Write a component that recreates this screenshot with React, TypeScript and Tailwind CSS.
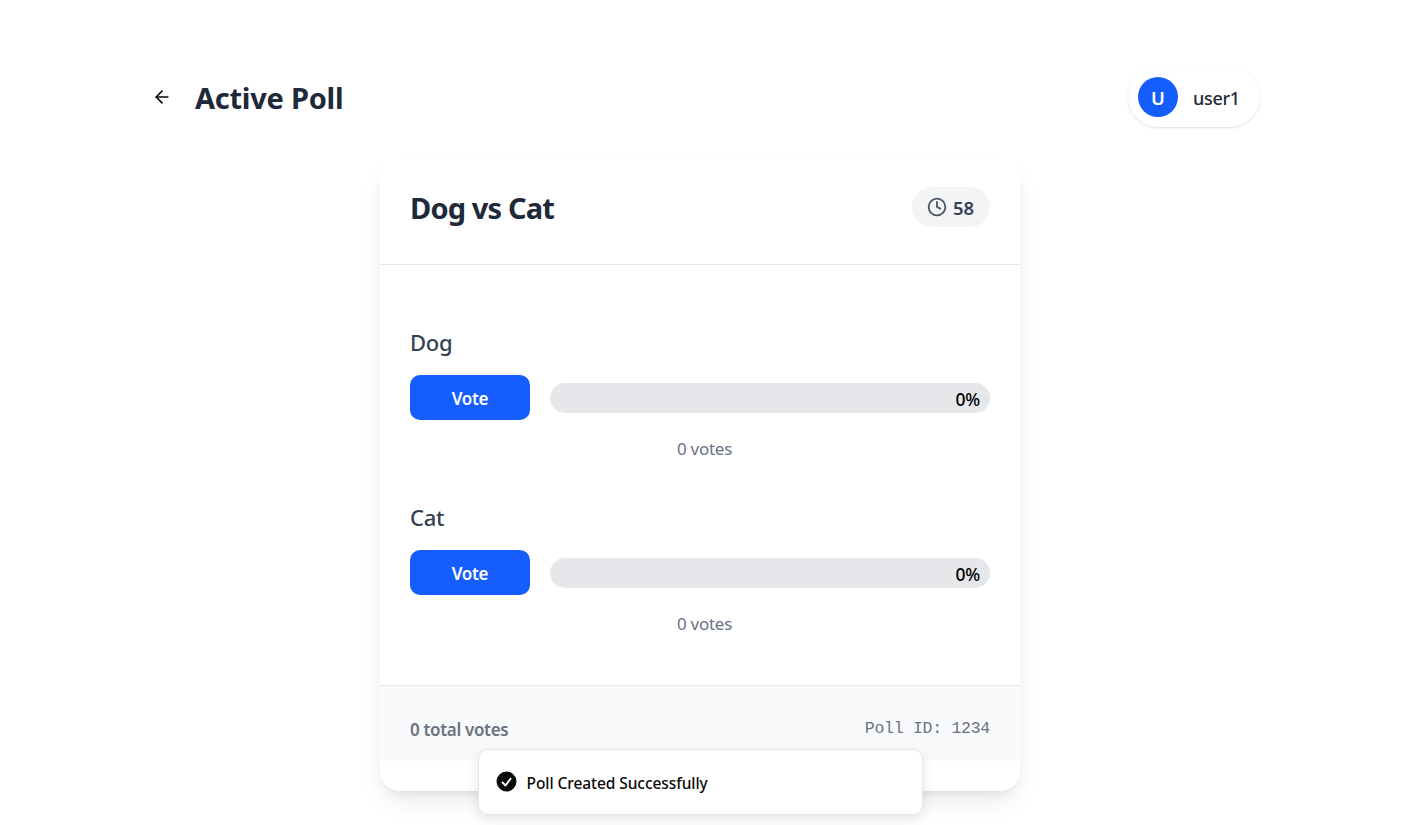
import { ArrowLeft, Clock } from "lucide-react";

const SANS = "font-['Noto_Sans','Open_Sans',sans-serif]";

type Option = { name: string; votes: number; percent: number };

const options: Option[] = [
  { name: "Dog", votes: 0, percent: 0 },
  { name: "Cat", votes: 0, percent: 0 },
];

function PollOption({ name, votes, percent }: Option) {
  return (
    <div className="h-[135px]">
      <h3 className="text-[22px] leading-[35px] font-medium tracking-[-0.3px] text-gray-700">{name}</h3>
      <div className="mt-[15px] flex items-center gap-5">
        <button className="h-[45px] w-[120px] rounded-[10px] bg-[#155dfc] pt-[2px] text-[17px] font-semibold text-white">
          <span className="tracking-[-0.35px]">Vote</span>
        </button>
        <div className="flex h-[30px] flex-1 items-center justify-end rounded-full bg-gray-200 pt-[3px] pr-[10px]">
          <span className="text-[17.5px] font-medium tracking-[-0.2px] text-black">{percent}%</span>
        </div>
      </div>
      <p className="mt-[15px] pl-[9px] text-center text-[17px] leading-[28px] tracking-[-0.25px] text-gray-500">
        {votes} votes
      </p>
    </div>
  );
}

export default function App() {
  return (
    <div className={`h-[825px] overflow-hidden bg-white px-[140px] pt-[67px] ${SANS}`}>
      <header className="flex h-[60px] w-[1120px] items-center justify-between">
        <div className="flex items-center">
          <button className="flex h-[50px] w-[45px] items-center justify-center pr-[2px]" aria-label="Back">
            <ArrowLeft className="size-5 text-neutral-950" strokeWidth={2} />
          </button>
          <h1 className="ml-[10px] pt-px text-[29px] leading-[45px] font-bold tracking-[-0.25px] text-gray-800">
            Active Poll
          </h1>
        </div>
        <div className="flex h-[60px] w-[132px] items-center rounded-full bg-white pl-[10px] shadow-sm">
          <div className="flex size-10 items-center justify-center rounded-full bg-[#155dfc] pt-[2px] text-[18.5px] font-semibold text-white">
            U
          </div>
          <span className="ml-[15px] pt-[2px] text-[18px] font-[550] tracking-[-0.3px] text-gray-800">user1</span>
        </div>
      </header>

      <main className="mt-[30px] ml-[240px] h-[634px] w-[640px] overflow-hidden rounded-[20px] bg-white shadow-[0_13px_25px_-4px_rgba(0,0,0,0.09),0_6px_10px_-5px_rgba(0,0,0,0.09)]">
        <div className="flex h-[108px] items-start justify-between border-b border-gray-200 px-[30px] pt-[30px]">
          <h2 className="-mt-px text-[29px] leading-[43px] font-bold tracking-[-0.85px] text-gray-800">Dog vs Cat</h2>
          <div className="flex h-10 w-[78px] items-center rounded-full bg-gray-100 pl-[15px]">
            <Clock className="size-5 text-gray-600" strokeWidth={2.2} />
            <span className="ml-[6px] pt-[2px] text-[18.5px] font-semibold text-gray-700">58</span>
          </div>
        </div>
        <div className="flex h-[420px] flex-col gap-10 px-[30px] pt-[60px]">
          {options.map((o) => (
            <PollOption key={o.name} {...o} />
          ))}
        </div>
        <div className="flex h-[76px] items-center justify-between border-t border-gray-200 bg-gray-50 px-[30px] pt-[12px] text-gray-500">
          <span className="text-[17px] font-semibold tracking-[-0.33px]">0 total votes</span>
          <span className="font-['Liberation_Mono',monospace] text-[16.5px] tracking-[-0.27px]">Poll ID: 1234</span>
        </div>
      </main>

      <div
        role="status"
        className="absolute top-[749px] left-[477.5px] flex h-[66px] w-[445px] items-center rounded-[10px] border border-gray-200 bg-white pl-[15px] shadow-[0_4px_14px_rgba(0,0,0,0.1)]"
      >
        <svg viewBox="0 0 20 20" fill="currentColor" className="mb-px size-[25px] text-neutral-950">
          <path
            fillRule="evenodd"
            clipRule="evenodd"
            d="M10 18a8 8 0 100-16 8 8 0 000 16zm3.857-9.809a.75.75 0 00-1.214-.882l-3.483 4.79-1.88-1.88a.75.75 0 10-1.06 1.061l2.5 2.5a.75.75 0 001.137-.089l4-5.5z"
          />
        </svg>
        <span className="ml-[8px] pt-[3px] text-[15.5px] font-medium tracking-[-0.07px] text-neutral-950">
          Poll Created Successfully
        </span>
      </div>
    </div>
  );
}
